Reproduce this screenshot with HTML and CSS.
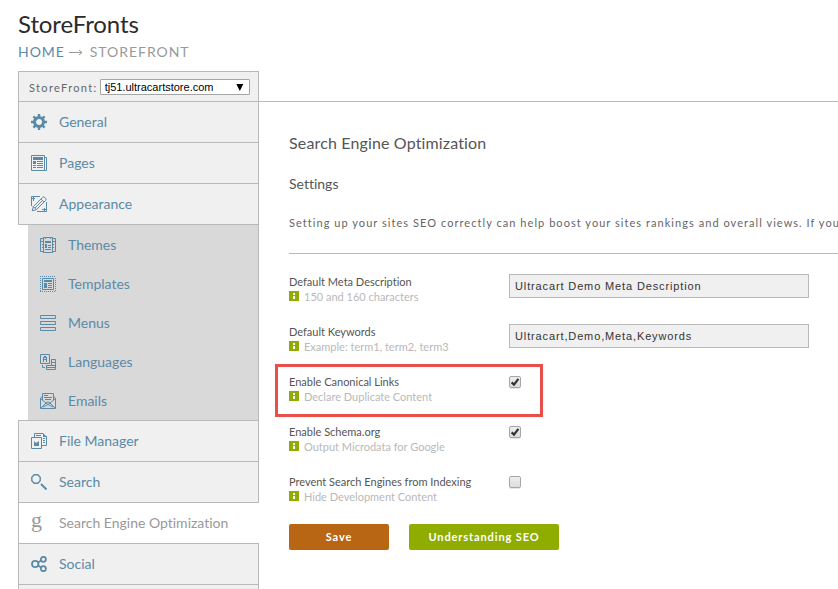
FILE: index.html
```
<!DOCTYPE html>
<html lang="en">
<head>
    <meta charset="UTF-8">
    <meta name="viewport" content="width=device-width, initial-scale=1.0">
    <title>StoreFronts - Search Engine Optimization</title>
    <link rel="stylesheet" href="styles.css">
</head>
<body>
    <header class="page-header">
        <h1>StoreFronts</h1>
        <div class="breadcrumb">
            <a href="#">HOME</a>
            <svg class="crumb-arrow" width="14" height="7" viewBox="0 0 14 7"><path d="M0 3.5H13M10 1L13 3.5L10 6"/></svg>
            <span>STOREFRONT</span>
        </div>
    </header>

    <div class="layout">
        <nav class="sidebar">
            <div class="store-picker">
                <label for="storefront">StoreFront:</label>
                <div class="select-wrap">
                    <select id="storefront">
                        <option>tj51.ultracartstore.com</option>
                    </select>
                    <svg class="select-arrow" width="8" height="7" viewBox="0 0 8 7"><path d="M0.3 0H7.3L3.8 7Z"/></svg>
                </div>
            </div>

            <a href="#" class="nav-item">
                <svg class="icon" viewBox="0 0 16 16"><circle cx="8" cy="8" r="4.5" fill="none" stroke="currentColor" stroke-width="3"/><path d="M8 0V3M8 13V16M0 8H3M13 8H16M2.4 2.4L4.5 4.5M11.5 11.5L13.6 13.6M13.6 2.4L11.5 4.5M4.5 11.5L2.4 13.6" fill="none" stroke="currentColor" stroke-width="2.4"/></svg>
                General
            </a>
            <a href="#" class="nav-item">
                <svg class="icon" viewBox="0 0 16 16"><path class="line" d="M.5 .5H13.5V15.5H.5ZM13.5 2.5H15.5V15.5H13.5M6 6.5H12M6 8.5H12M6 10.5H12M6 12.5H12"/><path d="M2 2H12V5H2ZM2 6H5V9H2ZM2 10H5V11H2ZM2 12H5V13H2Z"/></svg>
                Pages
            </a>
            <a href="#" class="nav-item has-submenu">
                <svg class="icon" viewBox="0 0 16 16"><path class="line" d="M.5 10V.5H9M0 2.5H4M2.5 0V5M6 15.5H15.5V6M13.5 12V15M11 13.5H15"/><path class="line" d="M1.2 14.8L2.3 10.6L11.6 1.3Q12.8 .3 14 1.6L14.5 2.1Q15.6 3.2 14.6 4.4L5.4 13.7ZM2.3 10.6L5.4 13.7M10 3L13 6M4 12L11.5 4.4"/></svg>
                Appearance
            </a>

            <div class="submenu">
                <a href="#" class="sub-item">
                    <svg class="icon" viewBox="0 0 16 16"><path class="line" d="M3.5 .5H12.5V15.5H3.5ZM3 1.5H.5V14.5H3M13 1.5H15.5V14.5H13M8 8.5H11M8 10.5H11M5 12.5H11"/><path d="M5 4H11V6H5ZM5 7H7V11H5ZM1 4H3V5H1ZM2 7H3V8H2ZM2 10H3V11H2ZM13 4H15V5H13ZM13 7H14V8H13ZM13 10H14V11H13ZM5 1H6V2H5ZM10 1H11V2H10Z"/></svg>
                    Themes
                </a>
                <a href="#" class="sub-item">
                    <svg class="icon" viewBox="0 0 16 16"><path class="line dots" d="M0 .5H16M0 15.5H16M.5 2V15M15.5 2V15"/><path class="line" d="M2.5 2.5H13.5V13.5H2.5ZM8 7.5H12M8 9.5H12M8 11.5H12"/><path d="M4 4H12V6H4ZM4 7H7V12H4Z"/></svg>
                    Templates
                </a>
                <a href="#" class="sub-item">
                    <svg class="icon" viewBox="0 0 16 16"><path class="line" d="M.5 .5H15.5V3.5H.5ZM.5 6.5H15.5V9.5H.5ZM.5 12.5H15.5V15.5H.5Z"/></svg>
                    Menus
                </a>
                <a href="#" class="sub-item">
                    <svg class="icon" viewBox="0 0 16 16"><path class="line" d="M.5 .5H9.5V9.5H.5ZM11 5.5H15.5V15.5H6.5V11.5H15.5M11.5 5V11M12 8.5H15M7 13.5H15M2.5 11V13.5H5"/><path d="M4 2H6V3H7V8H6V6H4V8H3V3H4ZM4 4V5H6V4Z" fill-rule="evenodd"/></svg>
                    Languages
                </a>
                <a href="#" class="sub-item">
                    <svg class="icon" viewBox="0 0 16 16"><path class="line" d="M.5 5V15.5H15.5V5M.5 5.5L2.5 3M15.5 5.5L13.5 3M2.5 7V.5H13.5V7M.5 5.5L6 10L1 15M15.5 5.5L10 10L15 15M4 2.5H8M4 4.5H12M5 6.5H11M6 10Q8 7.5 10 10M6 10L8 11.5L10 10M3 14L8 11.5L13 14"/></svg>
                    Emails
                </a>
            </div>

            <a href="#" class="nav-item">
                <svg class="icon" viewBox="0 0 16 16"><path class="line" d="M.5 4.5H10.5V15.5H.5ZM3.5 4V.5H12M12.5 1V3.5H15.5V12.5H11M5 2.5H10M12 5.5H14M12 7.5H14M12 9.5H14"/><path d="M3 8L5 10L8 8V13H3ZM12 0L16 4H12Z"/></svg>
                File Manager
            </a>
            <a href="#" class="nav-item">
                <svg class="icon" viewBox="0 0 16 16"><path d="M3.2 .8H6.8L9.2 3.2V6.8L6.8 9.2H3.2L.8 6.8V3.2Z" fill="none" stroke="currentColor" stroke-width="1.4"/><path d="M10 10L15.5 15.5" fill="none" stroke="currentColor" stroke-width="2"/></svg>
                Search
            </a>
            <a href="#" class="nav-item active">
                <span class="icon icon-g">g</span>
                Search Engine Optimization
            </a>
            <a href="#" class="nav-item">
                <svg class="icon" viewBox="0 0 16 16"><g fill="none" stroke="currentColor" stroke-width="1.8"><circle cx="4.2" cy="8" r="3.2"/><circle cx="12.4" cy="3.3" r="2.5"/><circle cx="12.4" cy="12.7" r="2.5"/><path d="M7 6.5L10.2 4.6M7 9.5L10.2 11.4"/></g></svg>
                Social
            </a>
            <div class="nav-rest"></div>
        </nav>

        <main class="content">
            <h2>Search Engine Optimization</h2>
            <h3>Settings</h3>
            <p class="intro">Setting up your sites SEO correctly can help boost your sites rankings and overall views. If you</p>

            <form class="seo-form">
                <div class="form-row">
                    <div class="field-label">
                        <label for="metaDescription">Default Meta Description</label>
                        <span class="hint"><i class="info"></i>150 and 160 characters</span>
                    </div>
                    <input type="text" id="metaDescription" class="text-input" value="Ultracart Demo Meta Description">
                </div>
                <div class="form-row">
                    <div class="field-label">
                        <label for="keywords">Default Keywords</label>
                        <span class="hint"><i class="info"></i>Example: term1, term2, term3</span>
                    </div>
                    <input type="text" id="keywords" class="text-input" value="Ultracart,Demo,Meta,Keywords">
                </div>
                <div class="form-row highlighted">
                    <div class="field-label">
                        <label for="canonical">Enable Canonical Links</label>
                        <span class="hint"><i class="info"></i>Declare Duplicate Content</span>
                    </div>
                    <span class="check-wrap">
                        <input type="checkbox" id="canonical" class="checkbox" checked>
                        <svg class="tick" viewBox="0 0 12 12"><path d="M2.6 6.4L5 8.6L9.4 2.8"/></svg>
                    </span>
                </div>
                <div class="form-row">
                    <div class="field-label">
                        <label for="schema">Enable Schema.org</label>
                        <span class="hint"><i class="info"></i>Output Microdata for Google</span>
                    </div>
                    <span class="check-wrap">
                        <input type="checkbox" id="schema" class="checkbox" checked>
                        <svg class="tick" viewBox="0 0 12 12"><path d="M2.6 6.4L5 8.6L9.4 2.8"/></svg>
                    </span>
                </div>
                <div class="form-row">
                    <div class="field-label">
                        <label for="noindex">Prevent Search Engines from Indexing</label>
                        <span class="hint"><i class="info"></i>Hide Development Content</span>
                    </div>
                    <span class="check-wrap">
                        <input type="checkbox" id="noindex" class="checkbox">
                    </span>
                </div>

                <div class="buttons">
                    <button type="button" class="btn save-btn">Save</button>
                    <button type="button" class="btn help-btn">Understanding SEO</button>
                </div>
            </form>
        </main>
    </div>
</body>
</html>
```
FILE: styles.css
```
:root {
    --link-color: #5b8aa6;
    --border-color: #b9b9b9;
    --panel-color: #f0f0f0;
    --green: #8fac00;
    --orange: #b86613;
}

* {
    box-sizing: border-box;
    margin: 0;
    padding: 0;
}

body {
    font-family: Lato, 'Liberation Sans', sans-serif;
    font-variant-ligatures: none;
    color: #555;
    background: #fff;
}

a {
    color: var(--link-color);
    text-decoration: none;
}

.page-header {
    height: 71px;
    padding: 9px 0 0 18px;
}

h1 {
    font-size: 24px;
    line-height: 30px;
    font-weight: 400;
    letter-spacing: -0.1px;
    color: #2b2b2b;
}

.breadcrumb {
    display: flex;
    align-items: center;
    height: 24px;
    font-size: 14px;
    letter-spacing: 0.95px;
    color: #999;
}

.crumb-arrow {
    margin: 3px 7px 0 4px;
    fill: none;
    stroke: #999;
}

.layout {
    display: flex;
    height: 518px;
    padding-left: 18px;
}

.sidebar {
    flex: none;
    width: 241px;
}

.store-picker {
    display: flex;
    align-items: center;
    height: 30px;
    padding: 1px 0 0 10px;
    border: 1px solid var(--border-color);
    border-bottom: none;
    background: var(--panel-color);
    font-size: 11px;
    letter-spacing: 1.35px;
    color: #666;
}

.select-wrap {
    position: relative;
    width: 150px;
    height: 16px;
    margin-left: 2px;
}

.select-wrap select {
    display: block;
    width: 150px;
    height: 16px;
    padding-left: 4px;
    appearance: none;
    border: 1px solid #a5a5a5;
    border-radius: 1px;
    background: #fff;
    font: 11px 'Liberation Sans', Arial, sans-serif;
    color: #000;
}

.select-arrow {
    position: absolute;
    top: 5px;
    right: 6px;
}

.nav-item {
    display: flex;
    align-items: center;
    height: 41px;
    padding: 0 0 2px 12px;
    border: 1px solid var(--border-color);
    border-bottom: none;
    background: var(--panel-color);
    font-size: 14px;
}

.nav-item.has-submenu {
    height: 42px;
    border-bottom: 1px solid var(--border-color);
}

.nav-item.active {
    border-right: none;
    background: #fff;
    color: #999;
}

.nav-rest {
    height: 5px;
    border: 1px solid var(--border-color);
    border-bottom: none;
    background: var(--panel-color);
}

.icon {
    flex: none;
    width: 16px;
    height: 16px;
    margin: 2px 12px 0 0;
    fill: currentColor;
}

.icon-g {
    font: 22px/9px 'Liberation Serif', 'Times New Roman', serif;
}

.line {
    fill: none;
    stroke: currentColor;
}

.dots {
    stroke-dasharray: 1 1;
}

.submenu {
    height: 195px;
    margin-left: 10px;
    border-right: 1px solid var(--border-color);
    background: #d9d9d9;
}

.sub-item {
    display: flex;
    align-items: center;
    height: 39px;
    padding-left: 12px;
    font-size: 14px;
}

.sub-item .icon {
    margin-top: 1px;
}

.content {
    flex: 1;
    min-width: 0;
    margin-top: 30px;
    padding: 31px 0 0 30px;
    border-top: 1px solid var(--border-color);
}

h2 {
    font-size: 16px;
    line-height: 20px;
    font-weight: 400;
    letter-spacing: 0.15px;
}

h3 {
    margin-top: 21px;
    font-size: 14px;
    line-height: 20px;
    font-weight: 400;
}

.intro {
    height: 41px;
    margin-top: 19px;
    border-bottom: 1px solid var(--border-color);
    font-size: 11px;
    line-height: 20px;
    letter-spacing: 1.05px;
    white-space: nowrap;
    color: #666;
}

.seo-form {
    padding-top: 20px;
}

.form-row {
    position: relative;
    display: flex;
    height: 50px;
}

.field-label {
    width: 220px;
    font-size: 11px;
    line-height: 15px;
    white-space: nowrap;
}

.field-label label {
    display: block;
}

.hint {
    display: flex;
    align-items: center;
    color: #b9b9b9;
}

.info {
    width: 10px;
    height: 10px;
    margin: -1px 5px 0 0;
    background:
        linear-gradient(#fff, #fff) 4px 2px / 2px 2px no-repeat,
        linear-gradient(#fff, #fff) 4px 5px / 2px 3px no-repeat,
        var(--green);
}

.text-input {
    width: 300px;
    height: 24px;
    padding-left: 5px;
    border: 1px solid var(--border-color);
    background: var(--panel-color);
    font: 11px 'Liberation Sans', Arial, sans-serif;
    letter-spacing: 0.87px;
    color: #333;
}

.highlighted::before {
    content: '';
    position: absolute;
    top: -10px;
    left: -14px;
    width: 262px;
    height: 47px;
    border: 3px solid #ea4e49;
}

.check-wrap {
    position: relative;
    width: 12px;
    height: 12px;
    margin-top: 2px;
}

.checkbox {
    display: block;
    width: 12px;
    height: 12px;
    appearance: none;
    border: 1px solid #a6a6a6;
    border-radius: 2px;
    background: linear-gradient(#eee, #dcdcdc);
    box-shadow: 0 1px #e6e6e6;
}

.tick {
    position: absolute;
    top: 0;
    left: 0;
    width: 12px;
    height: 12px;
    fill: none;
    stroke: #333;
    stroke-width: 2.2;
    pointer-events: none;
}

.buttons {
    display: flex;
    gap: 20px;
}

.btn {
    height: 26px;
    padding-bottom: 1px;
    border: none;
    border-radius: 2px;
    font-family: inherit;
    font-size: 11px;
    font-weight: 700;
    letter-spacing: 0.9px;
    color: #fff;
}

.save-btn {
    width: 100px;
    background: var(--orange);
}

.help-btn {
    width: 150px;
    background: var(--green);
}
```
